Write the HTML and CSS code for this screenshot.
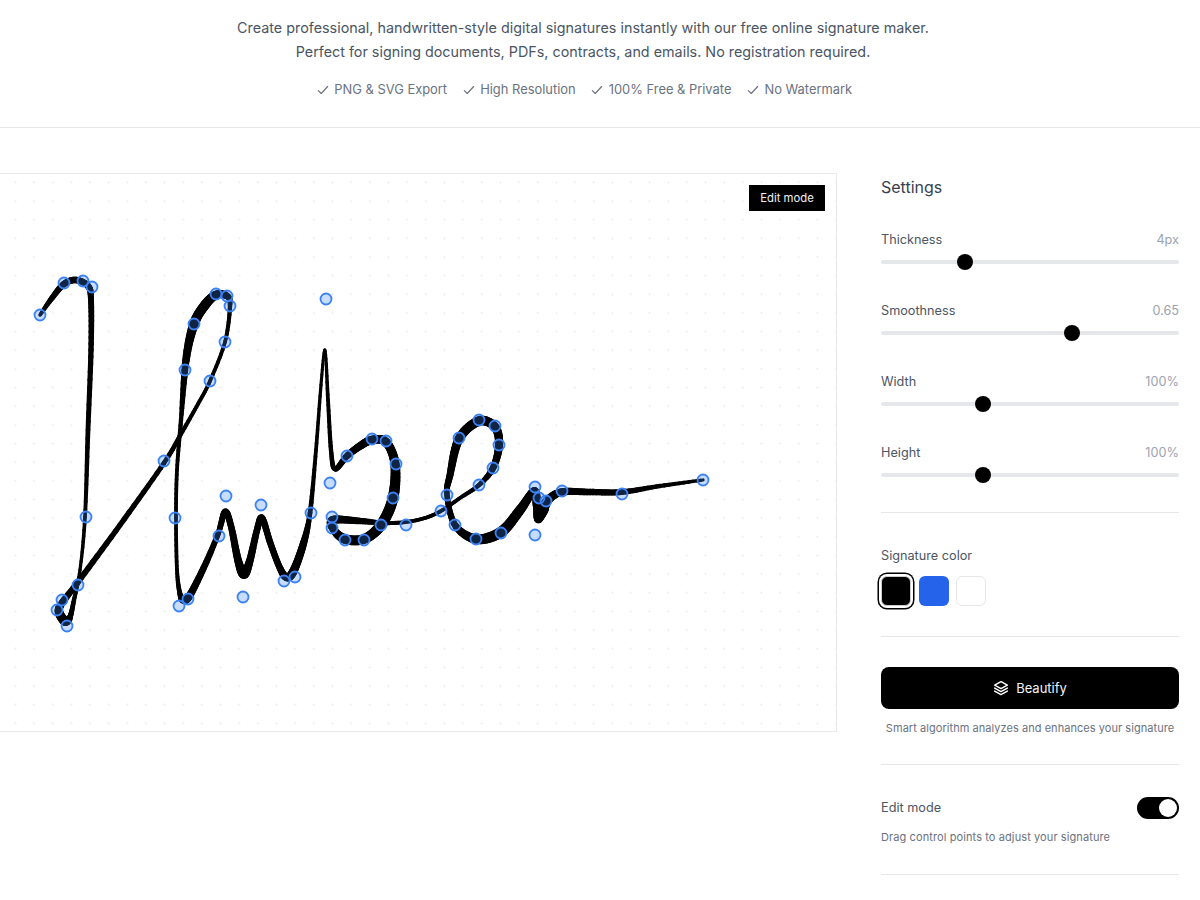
FILE: index.html
```html
<!DOCTYPE html>
<html lang="en">
<head>
<meta charset="utf-8">
<title>Signature Maker</title>
<link rel="stylesheet" href="styles.css">
</head>
<body>
<header class="intro">
  <p class="lead">Create professional, handwritten-style digital signatures instantly with our free online signature maker.<br>Perfect for signing documents, PDFs, contracts, and emails. No registration required.</p>
  <ul class="features">
    <li><svg class="check" viewBox="0 0 24 24"><path d="M4 13l5 5L20 6"/></svg>PNG &amp; SVG Export</li>
    <li><svg class="check" viewBox="0 0 24 24"><path d="M4 13l5 5L20 6"/></svg>High Resolution</li>
    <li><svg class="check" viewBox="0 0 24 24"><path d="M4 13l5 5L20 6"/></svg>100% Free &amp; Private</li>
    <li><svg class="check" viewBox="0 0 24 24"><path d="M4 13l5 5L20 6"/></svg>No Watermark</li>
  </ul>
</header>
<main class="workspace">
  <section class="canvas">
    <svg id="signature" class="signature" viewBox="0 174 836 557"></svg>
    <span class="badge">Edit mode</span>
  </section>
  <aside class="settings">
    <h2 class="settings-title">Settings</h2>
    <div class="sliders">
      <div class="slider"><div class="row"><span class="label">Thickness</span><span class="value">4px</span></div><div class="track"><span class="thumb" style="left:76px"></span></div></div>
      <div class="slider"><div class="row"><span class="label">Smoothness</span><span class="value">0.65</span></div><div class="track"><span class="thumb" style="left:183px"></span></div></div>
      <div class="slider"><div class="row"><span class="label">Width</span><span class="value">100%</span></div><div class="track"><span class="thumb" style="left:94px"></span></div></div>
      <div class="slider"><div class="row"><span class="label">Height</span><span class="value">100%</span></div><div class="track"><span class="thumb" style="left:94px"></span></div></div>
    </div>
    <div class="color-block">
      <div class="label">Signature color</div>
      <div class="swatches">
        <span class="swatch swatch-black"></span>
        <span class="swatch swatch-blue"></span>
        <span class="swatch swatch-white"></span>
      </div>
    </div>
    <div class="beautify-block">
      <button class="beautify" type="button">
        <svg class="layers" viewBox="0 0 24 24"><path d="M12 2.5l9.5 5.2-9.5 5.2-9.5-5.2z"/><path d="M2.5 12.2l9.5 5.2 9.5-5.2"/><path d="M2.5 16.6l9.5 5.2 9.5-5.2"/></svg>
        Beautify
      </button>
      <p class="note center">Smart algorithm analyzes and enhances your signature</p>
    </div>
    <div class="edit-block">
      <div class="row toggle-row"><span class="label">Edit mode</span><span class="toggle"><span class="knob"></span></span></div>
      <p class="note note-tight">Drag control points to adjust your signature</p>
    </div>
  </aside>
</main>
<script src="script.js"></script>
</body>
</html>
```
FILE: styles.css
```css
* { box-sizing: border-box; }
html, body { margin: 0; height: 900px; overflow: hidden; }
body { background: #fff; font-family: Inter, "Liberation Sans", sans-serif; color: #4b5563; }

.intro { height: 128px; border-bottom: 1px solid #e5e7eb; padding: 16px 34px 0 0; text-align: center; }
.lead { margin: 0; font-size: 14.35px; line-height: 24px; color: #4b5563; }
.features { list-style: none; margin: 15px 0 0; padding: 1px 0 0 2px; display: flex; justify-content: center; gap: 14.6px; font-size: 12.9px; line-height: 20px; color: #6b7280; }
.features li { display: flex; align-items: center; gap: 4.5px; }
.check { width: 14px; height: 14px; fill: none; stroke: #6b7280; stroke-width: 2; stroke-linecap: round; stroke-linejoin: round; }

.workspace { display: flex; align-items: flex-start; gap: 44px; padding-top: 45px; }
.canvas { position: relative; flex: 0 0 836px; height: 559px; border: 1px solid #e8e9ec; border-left: 0; background-image: radial-gradient(circle, #f1f2f4 1px, transparent 1.3px); background-size: 18.67px 18.67px; background-position: 6px -1px; }
.signature { display: block; width: 836px; height: 557px; overflow: visible; }
.badge { position: absolute; top: 11px; right: 11px; width: 76px; height: 26px; background: #000; color: #f0f0f0; font-size: 11.3px; line-height: 27px; text-align: center; }

.settings { flex: 0 0 298px; }
.settings-title { margin: 0 0 29px; font-size: 16px; line-height: 28px; font-weight: 400; color: #374151; }
.sliders { display: flex; flex-direction: column; gap: 31px; padding-bottom: 29px; border-bottom: 1px solid #e5e7eb; }
.slider { height: 40px; }
.row { display: flex; justify-content: space-between; align-items: center; }
.label { font-size: 12.7px; line-height: 20px; color: #4b5563; }
.value { font-size: 12.7px; line-height: 20px; color: #9ca3af; }
.track { position: relative; height: 4px; margin-top: 10px; border-radius: 2px; background: #e5e7eb; }
.thumb { position: absolute; top: -6px; width: 16px; height: 16px; border-radius: 50%; background: #000; }

.color-block { padding: 33px 0 30px; border-bottom: 1px solid #e5e7eb; }
.swatches { display: flex; gap: 7.5px; margin-top: 10px; }
.swatch { width: 30px; height: 30px; border-radius: 6px; }
.swatch-black { background: #000; border: 1px solid #ccc; box-shadow: 0 0 0 2px #fff, 0 0 0 3.5px #000; }
.swatch-blue { background: #2563eb; }
.swatch-white { background: #fff; border: 1px solid #e5e7eb; }

.beautify-block { padding: 30px 0 27px; border-bottom: 1px solid #e5e7eb; }
.beautify { display: flex; width: 100%; height: 42px; align-items: center; justify-content: center; gap: 7px; border: 0; border-radius: 8px; background: #000; color: #f3f4f6; font: 400 13px Inter, "Liberation Sans", sans-serif; }
.layers { width: 16px; height: 16px; fill: none; stroke: #fff; stroke-width: 2.2; stroke-linejoin: round; stroke-linecap: round; }
.note { margin: 10px 0 0; font-size: 11px; line-height: 18px; color: #6b7280; letter-spacing: .05px; }
.note-tight { margin-top: 9px; letter-spacing: .1px; }
.center { text-align: center; }

.edit-block { padding: 32px 0 28px; border-bottom: 1px solid #e5e7eb; }
.toggle-row { height: 22px; }
.toggle { position: relative; width: 42px; height: 22px; border-radius: 11px; background: #000; }
.knob { position: absolute; top: 2px; right: 2px; width: 18px; height: 18px; border-radius: 50%; background: #fff; }
```
FILE: script.js
```js
var NS = "http://www.w3.org/2000/svg";
var svg = document.getElementById("signature");
var pressure = 1.08;

var stroke = [
  [40,315,3],[52,298,5],[64,284,6],[76,280,6],[88,286,6],[91,300,5.5],[91,350,5],[88,430,4.5],[85,517,3.5],[80,570,3],[74,600,4],[70,617,5],
  [65,621,9],[59,612,8],[62,603,6.5],[78,582,5.5],[120,525,5],[164,463,4.5],[181,434,4],[198,404,3.5],[210,381,3.5],[225,342,3.5],[230,306,4],[227,296,6],[216,295,8],[205,305,9],[194,324,9],[186,360,7],[181,420,4],[177,470,3.5],[176,518,3.5],[177,570,3.5],[180,594,4.5],
  [184,600,7],[190,595,7],[205,565,6],[218,534,5],[225,512,6],[231,526,6],[238,560,7],[244,574,9],[250,560,7],[257,530,6],[262,518,6],[270,542,6],[279,566,6],[286,577,7],[293,572,8],[303,545,7],[310,513,4.5],[316,450,3.5],[321,385,3],[325,350,2.5],[328,400,3.5],[331,450,4],[335,469,4.5],
  [347,456,6],[360,446,7],[372,440,8],[386,442,8],[395,464,8.5],[393,498,10],[381,525,10],[364,539,9],[345,539,9],[334,530,7],[333,520,8],[360,521,6],[385,523,4],[406,522,3.5],[425,518,3.5],[441,511,3.5],[460,498,3.5],[479,485,4],[493,468,6],[499,445,7.5],[495,427,8],[479,421,9],[459,439,8.5],[450,475,6.5],[447,495,5],[455,525,6],[476,539,9],[501,532,10],[520,510,9],[534,491,7],[537,505,8],[538,519,7],[543,510,10],[548,500,8],[562,492,7],[590,492,6],[622,492,5.5],[660,486,4],[703,480,3]
];

var handles = [
  [40,315],[64,283],[83,281],[92,287],[86,517],[78,585],[67,626],[57,610],[62,600],[164,461],[210,381],[225,342],[230,306],[227,296],[216,294],[194,324],[185,370],[175,518],[179,606],[188,599],[219,536],[226,496],[243,597],[261,505],[284,581],[295,577],[311,513],[326,299],[330,483],[347,456],[372,439],[386,441],[396,464],[393,498],[381,525],[364,540],[345,540],[332,528],[332,517],[406,525],[441,511],[479,485],[493,468],[499,445],[495,426],[479,420],[459,438],[447,495],[455,525],[476,539],[501,533],[535,487],[535,535],[539,498],[546,501],[562,491],[622,494],[703,480]
];

function make(name, attrs) {
  var el = document.createElementNS(NS, name);
  for (var key in attrs) el.setAttribute(key, attrs[key]);
  return el;
}

function spline(a, b, c, d, t) {
  return 0.5 * (2 * b + (c - a) * t + (2 * a - 5 * b + 4 * c - d) * t * t + (3 * b - a - 3 * c + d) * t * t * t);
}

var steps = 10;
var prev = stroke[0];
for (var i = 0; i < stroke.length - 1; i++) {
  var p0 = stroke[Math.max(i - 1, 0)], p1 = stroke[i], p2 = stroke[i + 1], p3 = stroke[Math.min(i + 2, stroke.length - 1)];
  for (var s = 1; s <= steps; s++) {
    var t = s / steps;
    var x = spline(p0[0], p1[0], p2[0], p3[0], t);
    var y = spline(p0[1], p1[1], p2[1], p3[1], t);
    var w = (p1[2] + (p2[2] - p1[2]) * t) * pressure;
    svg.appendChild(make("line", { x1: prev[0].toFixed(2), y1: prev[1].toFixed(2), x2: x.toFixed(2), y2: y.toFixed(2), stroke: "#000", "stroke-width": w.toFixed(2), "stroke-linecap": "round" }));
    prev = [x, y];
  }
}

handles.forEach(function (h) {
  svg.appendChild(make("circle", { cx: h[0], cy: h[1], r: 5.5, fill: "rgba(59,130,246,.28)", stroke: "#3b82f6", "stroke-width": 1.8 }));
});
```
